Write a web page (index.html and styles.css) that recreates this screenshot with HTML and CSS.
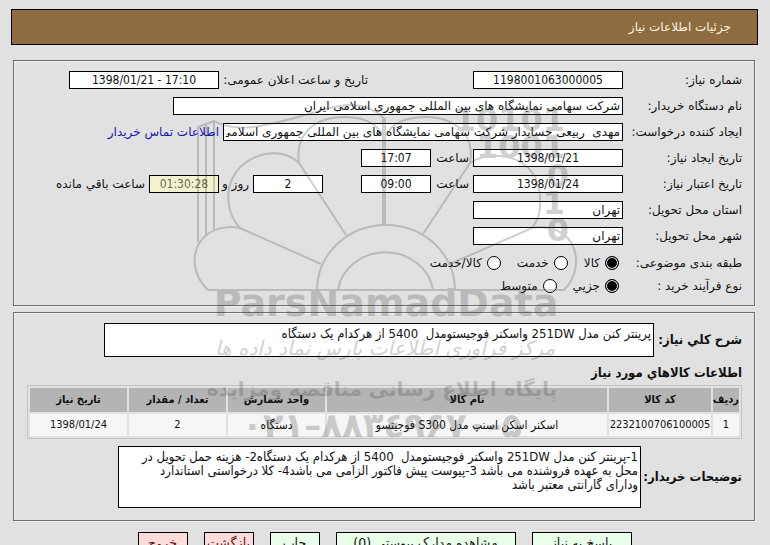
FILE: index.html
```html
<!DOCTYPE html>
<html lang="fa" dir="rtl">
<head>
<meta charset="utf-8">
<title>جزئیات اطلاعات نیاز</title>
<link rel="stylesheet" href="styles.css">
</head>
<body>
<header class="title-bar">جزئیات اطلاعات نیاز</header>
<main>
<fieldset class="panel details">
  <div class="row">
    <label class="name" for="number">شماره نیاز:</label>
    <input class="mid num" id="number" value="1198001063000005" readonly>
    <label class="announce" for="announced">تاریخ و ساعت اعلان عمومی:</label>
    <input class="mid num" id="announced" value="1398/01/21 - 17:10" readonly>
  </div>
  <div class="row">
    <label class="name" for="org">نام دستگاه خریدار:</label>
    <input class="widest" id="org" value="شرکت سهامی نمایشگاه های بین المللی جمهوری اسلامی ایران" readonly>
  </div>
  <div class="row">
    <label class="name" for="creator">ایجاد کننده درخواست:</label>
    <input class="wide" id="creator" value="مهدی  ربیعی حسابدار شرکت سهامی نمایشگاه های بین المللی جمهوری اسلامی ایران" readonly>
    <a class="after" href="#contact">اطلاعات تماس خریدار</a>
  </div>
  <div class="row">
    <label class="name" for="created">تاریخ ایجاد نیاز:</label>
    <input class="mid num" id="created" value="1398/01/21" readonly>
    <label class="hour" for="created-hour">ساعت</label>
    <input class="short num" id="created-hour" value="17:07" readonly>
  </div>
  <div class="row">
    <label class="name" for="valid">تاریخ اعتبار نیاز:</label>
    <input class="mid num" id="valid" value="1398/01/24" readonly>
    <label class="hour" for="valid-hour">ساعت</label>
    <input class="short num" id="valid-hour" value="09:00" readonly>
    <input class="short num days" id="days" value="2" readonly>
    <label class="day" for="days">روز و</label>
    <input class="short num timer" id="left" value="01:30:28" readonly>
    <label class="after" for="left">ساعت باقي مانده</label>
  </div>
  <div class="row">
    <label class="name" for="province">استان محل تحویل:</label>
    <input class="mid" id="province" value="تهران" readonly>
  </div>
  <div class="row">
    <label class="name" for="city">شهر محل تحویل:</label>
    <input class="mid" id="city" value="تهران" readonly>
  </div>
  <div class="row choices" role="radiogroup" aria-labelledby="category">
    <span class="name" id="category">طبقه بندی موضوعی:</span>
    <label class="choice"><input type="radio" name="category" checked>کالا</label>
    <label class="choice"><input type="radio" name="category">خدمت</label>
    <label class="choice"><input type="radio" name="category">کالا/خدمت</label>
  </div>
  <div class="row choices" role="radiogroup" aria-labelledby="process">
    <span class="name" id="process">نوع فرآیند خرید :</span>
    <label class="choice"><input type="radio" name="process" checked>جزيي</label>
    <label class="choice"><input type="radio" name="process">متوسط</label>
  </div>
</fieldset>

<fieldset class="panel goods">
  <div class="note">
    <label for="summary">شرح كلي نياز:</label>
    <textarea class="summary" id="summary" readonly>پرینتر کنن مدل 251DW واسکنر فوجیستومدل  5400 از هرکدام یک دستگاه</textarea>
  </div>
  <h2>اطلاعات كالاهاي مورد نياز</h2>
  <table>
    <colgroup><col class="c-row"><col class="c-code"><col class="c-name"><col class="c-unit"><col class="c-unit"><col class="c-unit"></colgroup>
    <thead>
      <tr><th>ردیف</th><th>کد کالا</th><th>نام کالا</th><th>واحد شمارش</th><th>تعداد / مقدار</th><th>تاریخ نیاز</th></tr>
    </thead>
    <tbody>
      <tr><td>1</td><td>2232100706100005</td><td class="words">اسکنر اسکن اسنپ مدل S300 فوجیتسو</td><td class="words">دستگاه</td><td>2</td><td>1398/01/24</td></tr>
    </tbody>
  </table>
  <div class="note buyer">
    <label for="remarks">توضیحات خریدار:</label>
    <textarea class="remarks" id="remarks" readonly>1-پرینتر کنن مدل 251DW واسکنر فوجیستومدل  5400 از هرکدام یک دستگاه2- هزینه حمل تحویل در
محل به عهده فروشنده می باشد 3-پیوست پیش فاکتور الزامی می باشد4- کلا درخواستی استاندارد
ودارای گارانتی معتبر باشد</textarea>
  </div>
</fieldset>
</main>

<div class="actions">
  <button class="b-medium" type="button">پاسخ به نیاز</button>
  <button class="b-large" type="button">مشاهده مدارک پیوستی (0)</button>
  <button class="b-small" type="button">چاپ</button>
  <button class="b-small red" type="button">بازگشت</button>
  <button class="b-small red" type="button">خروج</button>
</div>

<svg class="watermark" viewBox="0 0 770 545" width="770" height="545" direction="ltr" aria-hidden="true">
  <g class="lines">
    <path d="M198 242V127L214 121V231M206 236V124M214 121C235 133 262 127 298 117C335 106 360 96 384 118"/>
    <path d="M208 290H565M317 290A69 65 0 0 1 455 290M338 290A48 44 0 0 1 433 290"/>
    <path d="M208 290C193 276 191 256 200 242C210 228 227 225 240 228L321 264"/>
    <path d="M240 228C227 214 225 193 233 177C246 153 281 145 299 163L346 235"/>
    <path d="M299 163C295 135 313 117 345 117C368 117 382 127 384 141"/>
    <path d="M564 290C578 276 579 256 571 242C562 229 544 225 532 228L450 264"/>
    <path d="M532 228C544 214 541 190 535 177C522 153 488 151 470 163L423 234"/>
    <path d="M470 163C475 136 457 117 425 117C401 117 387 127 384 141"/>
    <path class="stem" d="M384 118V225"/>
  </g>
  <g class="digits">
    <text x="565" y="131">10101</text>
    <text x="565" y="158">1001</text>
    <text x="569" y="187">0</text>
    <text x="565" y="214">1</text>
    <text x="569" y="241">0</text>
  </g>
  <text class="brand" x="386" y="316">ParsNamadData</text>
  <text class="slogan" x="385" y="355" direction="rtl">مرکز فرآوری اطلاعات پارس نماد داده ها</text>
  <text class="portal" x="382" y="396" direction="rtl">پایگاه اطلاع رسانی مناقصه ومزایده</text>
  <text class="phone" x="382" y="437">۰۲۱–۸۸۳٤۹۶۷۰-۵</text>
</svg>
</body>
</html>
```
FILE: styles.css
```css
* { box-sizing: border-box; }

html { scrollbar-width: none; }

body {
  position: relative;
  margin: 0;
  padding: 9px 12px 12px 11px;
  overflow-x: hidden;
  background: #e1e1e1;
  color: #111;
  font-family: "DejaVu Sans", sans-serif;
  font-size: 12px;
  line-height: 14px;
}

input, textarea, button { font: inherit; color: inherit; }

.title-bar {
  padding: 9px 26px;
  border: 1px solid #000;
  background: #8f6c40;
  color: #fbf3e2;
  line-height: 16px;
}

main { padding: 15px 3px 0 2px; }

.panel {
  min-width: 0;
  margin: 0;
  border: 1px solid #6e6e6e;
  box-shadow: inset 1px 1px #f0f0f0, 1px 1px #f0f0f0;
}

.details {
  display: flex;
  flex-direction: column;
  gap: 8px;
  padding: 10px 12px 12px;
}

.row {
  display: flex;
  align-items: center;
  height: 18px;
  white-space: nowrap;
}

.name { width: 119px; }

.row input:not([type="radio"]) {
  height: 18px;
  padding: 0 2px;
  border: 1px solid #000;
  border-radius: 0;
  background-color: #fff;
}

.row .num {
  direction: ltr;
  text-align: center;
  font-family: "DejaVu Sans Condensed", "DejaVu Sans", sans-serif;
}

.short { width: 70px; }
.mid { width: 150px; }
.wide { width: 400px; }
.widest { width: 450px; }

.announce { width: 149px; margin-right: 105px; }
.hour { width: 42px; padding-right: 4px; }
.days { margin-right: 38px; }
.day { width: 34px; padding-right: 4px; }
.after { padding-right: 4px; }

.row input.timer:not([type="radio"]) { background-color: #f3f3d0; color: #6a6a55; }

a { color: #1515b0; text-decoration: none; }

.choices { height: 15px; }
.choices:nth-child(8) { margin-top: 2px; }

.choice {
  display: flex;
  align-items: center;
  gap: 5px;
  margin-left: 12px;
  padding-right: 4px;
}

.choice input {
  appearance: none;
  width: 14px;
  height: 14px;
  margin: 0;
  border: 1px solid #000;
  border-radius: 50%;
  background: #fff;
}

.choice input:checked {
  background: #000;
  box-shadow: inset 0 0 0 1px #fff;
}

.goods {
  margin-top: 6px;
  padding: 10px 12px 12px 13px;
  font-family: "DejaVu Sans Condensed", "DejaVu Sans", sans-serif;
}

.note {
  display: flex;
  align-items: center;
  justify-content: space-between;
}

.note label, h2 {
  flex: none;
  font-size: 13px;
  font-weight: bold;
}

textarea {
  display: block;
  min-width: 0;
  padding: 3px 2px;
  border: 1px solid #000;
  background: #fff;
  font-size: 13px;
  line-height: 14px;
  resize: none;
  overflow: hidden;
}

.summary { flex: 0 1 550px; height: 34px; margin-left: 77px; }
.remarks { flex: 0 1 523px; height: 62px; margin-left: 91px; }

h2 { margin: 9px 0 5px; line-height: 14px; }

table {
  width: 100%;
  table-layout: fixed;
  border: 1px solid #c4c4c4;
  border-spacing: 2px;
  text-align: center;
  font-size: 11px;
}

th, td { padding: 0; white-space: nowrap; }
th { height: 24px; background: #b4b4b4; }
td { height: 22px; background: #f6f6f6; }
.words { font-size: 12px; }

.c-row { width: 26px; }
.c-code { width: 102px; }
.c-unit { width: 97px; }

.buyer { margin-top: 7px; }

.actions {
  display: flex;
  justify-content: center;
  gap: 16px;
  margin-top: 11px;
}

button {
  height: 22px;
  padding: 0;
  border: 1px solid #000;
  background: #eaffea;
  font-family: "DejaVu Sans Condensed", "DejaVu Sans", sans-serif;
  font-size: 14px;
  line-height: 14px;
  white-space: nowrap;
}

.b-small { width: 50px; }
.b-medium { width: 100px; }
.b-large { width: 180px; }
.red { background: #ffdcdc; color: #5a1010; }

.watermark {
  position: absolute;
  top: 0;
  left: 50%;
  transform: translateX(-50%);
  opacity: 0.24;
  pointer-events: none;
}

.lines { fill: none; stroke: #404040; stroke-width: 2; }
.lines .stem { stroke-width: 4; }

.watermark text { fill: #404040; text-anchor: middle; }
.watermark .digits text {
  text-anchor: end;
  font: bold 32px "DejaVu Sans", sans-serif;
}
.watermark .brand { font: bold 38px "DejaVu Sans", sans-serif; }
.watermark .slogan { font: italic 20px "DejaVu Sans", sans-serif; }
.watermark .portal { font: bold 20px "DejaVu Sans", sans-serif; }
.watermark .phone { font: bold 34px "DejaVu Sans", sans-serif; }
```
